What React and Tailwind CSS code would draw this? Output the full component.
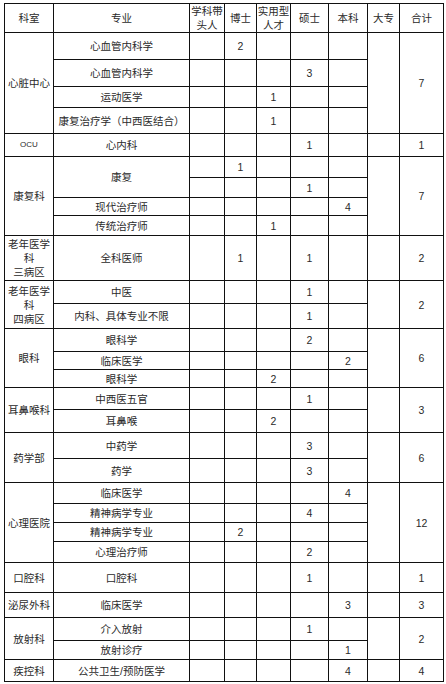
import React from "react";

const groups = [
  {
    dept: "心脏中心",
    total: "7",
    rows: [
      { h: 27, major: "心血管内科学", v: ["", "2", "", "", ""] },
      { h: 27, major: "心血管内科学", v: ["", "", "", "3", ""] },
      { h: 21, major: "运动医学", v: ["", "", "1", "", ""] },
      { h: 26, major: "康复治疗学（中西医结合）", v: ["", "", "1", "", ""] },
    ],
  },
  {
    dept: "OCU",
    small: true,
    total: "1",
    rows: [{ h: 23, major: "心内科", v: ["", "", "", "1", ""] }],
  },
  {
    dept: "康复科",
    total: "7",
    rows: [
      { h: 21, major: "康复", span: 2, v: ["", "1", "", "", ""] },
      { h: 20, skip: true, v: ["", "", "", "1", ""] },
      { h: 18, major: "现代治疗师", v: ["", "", "", "", "4"] },
      { h: 20, major: "传统治疗师", v: ["", "", "1", "", ""] },
    ],
  },
  {
    dept: ["老年医学", "科", "三病区"],
    total: "2",
    rows: [{ h: 45, major: "全科医师", v: ["", "1", "", "1", ""] }],
  },
  {
    dept: ["老年医学", "科", "四病区"],
    total: "2",
    rows: [
      { h: 23, major: "中医", v: ["", "", "", "1", ""] },
      { h: 25, major: "内科、具体专业不限", v: ["", "", "", "1", ""] },
    ],
  },
  {
    dept: "眼科",
    total: "6",
    rows: [
      { h: 23, major: "眼科学", v: ["", "", "", "2", ""] },
      { h: 18, major: "临床医学", v: ["", "", "", "", "2"] },
      { h: 18, major: "眼科学", v: ["", "", "2", "", ""] },
    ],
  },
  {
    dept: "耳鼻喉科",
    total: "3",
    rows: [
      { h: 22, major: "中西医五官", v: ["", "", "", "1", ""] },
      { h: 23, major: "耳鼻喉", v: ["", "", "2", "", ""] },
    ],
  },
  {
    dept: "药学部",
    total: "6",
    rows: [
      { h: 26, major: "中药学", v: ["", "", "", "3", ""] },
      { h: 24, major: "药学", v: ["", "", "", "3", ""] },
    ],
  },
  {
    dept: "心理医院",
    total: "12",
    rows: [
      { h: 21, major: "临床医学", v: ["", "", "", "", "4"] },
      { h: 19, major: "精神病学专业", v: ["", "", "", "4", ""] },
      { h: 19, major: "精神病学专业", v: ["", "2", "", "", ""] },
      { h: 21, major: "心理治疗师", v: ["", "", "", "2", ""] },
    ],
  },
  {
    dept: "口腔科",
    total: "1",
    rows: [{ h: 30, major: "口腔科", v: ["", "", "", "1", ""] }],
  },
  {
    dept: "泌尿外科",
    total: "3",
    rows: [{ h: 25, major: "临床医学", v: ["", "", "", "", "3"] }],
  },
  {
    dept: "放射科",
    total: "2",
    rows: [
      { h: 23, major: "介入放射", v: ["", "", "", "1", ""] },
      { h: 19, major: "放射诊疗", v: ["", "", "", "", "1"] },
    ],
  },
  {
    dept: "疾控科",
    total: "4",
    rows: [{ h: 22, major: "公共卫生/预防医学", v: ["", "", "", "", "4"] }],
  },
];

const cell = "border border-[#111] p-0 text-center align-middle";

export default function App() {
  return (
    <div className="w-[446px] h-[684px] bg-white overflow-hidden pt-[3px] pl-[4px] font-['Liberation_Sans','Noto_Sans_CJK_SC',sans-serif] text-[10.5px] leading-[14px] text-[#2a2a2a]">
      <table className="table-fixed border-collapse w-[439px]">
        <colgroup>
          <col className="w-[49px]" />
          <col className="w-[136px]" />
          <col className="w-[35px]" />
          <col className="w-[32px]" />
          <col className="w-[34px]" />
          <col className="w-[38px]" />
          <col className="w-[39px]" />
          <col className="w-[32px]" />
          <col className="w-[44px]" />
        </colgroup>
        <tbody>
          <tr style={{ height: 29 }}>
            <td className={cell}>科室</td>
            <td className={cell}>专业</td>
            <td className={cell}>
              学科带
              <br />
              头人
            </td>
            <td className={cell}>博士</td>
            <td className={cell}>
              实用型
              <br />
              人才
            </td>
            <td className={cell}>硕士</td>
            <td className={cell}>本科</td>
            <td className={cell}>大专</td>
            <td className={cell}>合计</td>
          </tr>
          {groups.map((g, gi) =>
            g.rows.map((r, ri) => (
              <tr key={gi + "-" + ri} style={{ height: r.h }}>
                {ri === 0 && (
                  <td
                    className={cell + (g.small ? " text-[8px]" : "")}
                    rowSpan={g.rows.length}
                  >
                    {Array.isArray(g.dept)
                      ? g.dept.map((d, i) => (
                          <React.Fragment key={i}>
                            {i > 0 && <br />}
                            {d}
                          </React.Fragment>
                        ))
                      : g.dept}
                  </td>
                )}
                {!r.skip && (
                  <td className={cell} rowSpan={r.span || 1}>
                    {r.major}
                  </td>
                )}
                {r.v.map((x, i) => (
                  <td key={i} className={cell}>
                    {x}
                  </td>
                ))}
                {ri === 0 && (
                  <>
                    <td className={cell} rowSpan={g.rows.length}></td>
                    <td className={cell} rowSpan={g.rows.length}>
                      {g.total}
                    </td>
                  </>
                )}
              </tr>
            ))
          )}
        </tbody>
      </table>
    </div>
  );
}
